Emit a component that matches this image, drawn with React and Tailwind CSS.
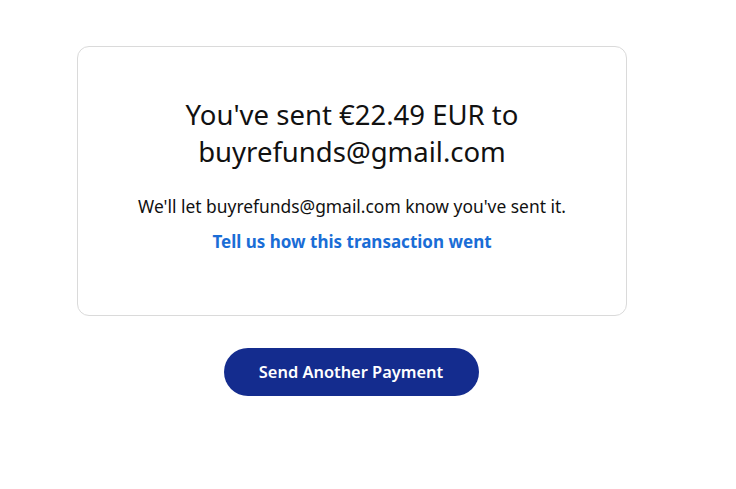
export default function App() {
  return (
    <div className="min-h-[489px] bg-white font-['Noto_Sans','Lato',sans-serif] text-[#111]">
      <div className="ml-[77px] w-[550px] pt-[46px]">
        <div className="flex h-[270px] flex-col items-center rounded-[12px] border border-[#dadada] px-6 pt-[49px] text-center">
          <h1 className="text-[27.5px] leading-[37px] font-normal">
            You've sent €22.49 EUR to
            <br />
            buyrefunds@gmail.com
          </h1>
          <p className="mt-[24px] text-[17.4px] leading-[24px]">
            We'll let buyrefunds@gmail.com know you've sent it.
          </p>
          <a href="#" className="mt-[12px] text-[17px] leading-[24px] font-bold text-[#1a6dd6]">
            Tell us how this transaction went
          </a>
        </div>
        <div className="mt-[32px] flex justify-center">
          <button className="mr-[2px] h-[48px] w-[255px] rounded-full bg-[#142c8e] text-[16.4px] font-semibold text-white">
            Send Another Payment
          </button>
        </div>
      </div>
    </div>
  )
}
